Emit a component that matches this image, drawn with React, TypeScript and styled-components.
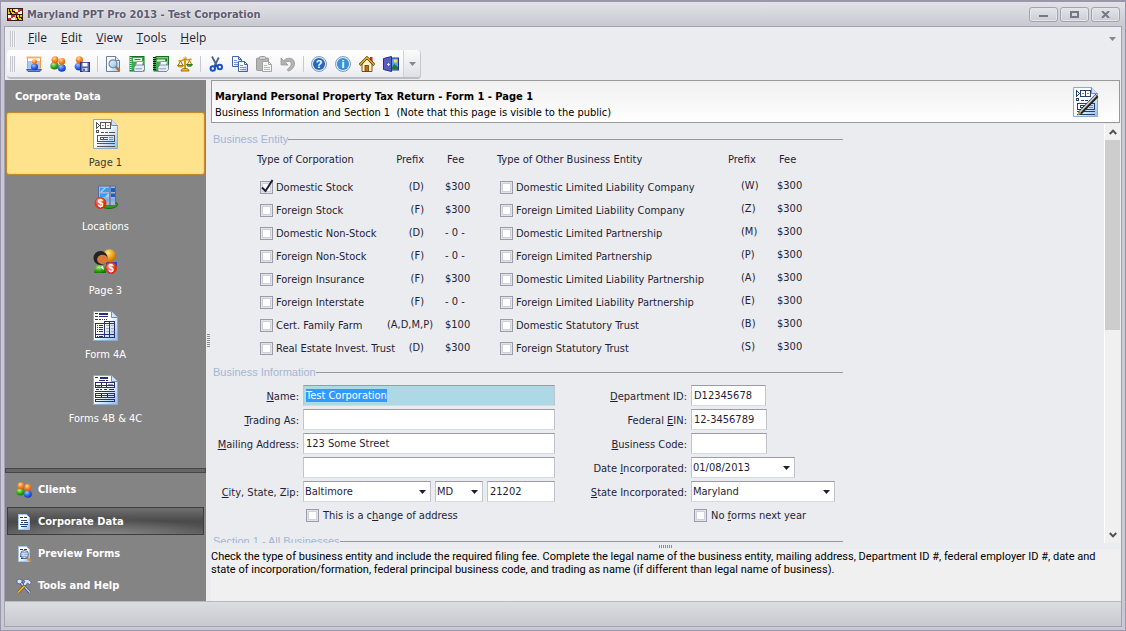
import React, { useEffect, useRef } from "react";
import styled, { createGlobalStyle, css } from "styled-components";

const uiFont = '"DejaVu Sans Condensed", Tahoma, "DejaVu Sans", sans-serif';
const ink = "#1f1e36";
const surface = "#ebecef";
const frameLine = "#a3a3b0";

const GlobalStyle = createGlobalStyle`
  *, *::before, *::after { box-sizing: border-box; }
  body { margin: 0; background: #c9c9d3; }
  button, input, select { font: inherit; color: inherit; margin: 0; }
  ::selection { background: #3399ff; color: #ffffff; }
`;

/* ---------- window frame ---------- */

const Shell = styled.div`
  display: flex;
  flex-direction: column;
  height: 100vh;
  border: 1px solid #9a97aa;
  border-top-width: 2px;
  background: #c9c9d5;
  font: 11px/14px ${uiFont};
  color: ${ink};
  padding: 0 3px 3px;
`;

const TitleBar = styled.header`
  display: flex;
  align-items: center;
  flex: none;
  height: 24px;
  margin: 0 -3px;
  padding: 0 5px 0 6px;
  gap: 4px;
  background: linear-gradient(#e2e2e8, #c8c8d0);
`;

const Title = styled.h1`
  flex: 1;
  margin: 0;
  padding-top: 1px;
  font-size: 11px;
  line-height: 16px;
  color: #5c5b70;
  text-shadow: 0 0 2px #ffffff;
`;

const CaptionButtons = styled.div`
  display: flex;
  gap: 2px;
`;

const CaptionButton = styled.button`
  display: flex;
  align-items: center;
  justify-content: center;
  width: 29px;
  height: 15px;
  padding: 0;
  border: 1px solid #a3a2ae;
  border-radius: 3px;
  background: linear-gradient(#e4e4e9, #cccdd3);
  box-shadow: inset 0 0 0 1px #e4e4ea;
`;

const Frame = styled.div`
  display: flex;
  flex-direction: column;
  flex: 1;
  min-height: 0;
  border: 1px solid ${frameLine};
  background: ${surface};
`;

/* ---------- menu and toolbar ---------- */

const MenuBar = styled.nav`
  display: flex;
  align-items: center;
  flex: none;
  height: 23px;
  padding: 0 5px;
  font: 12px/16px "Open Sans", "Noto Sans", sans-serif;
`;

const Grip = styled.span`
  width: 6px;
  height: 16px;
  margin-right: 5px;
  background: repeating-linear-gradient(90deg, #c4c4cc 0 1px, #f6f6f8 1px 2px);
`;

const MenuItem = styled.button`
  padding: 0 7px 1px;
  border: 0;
  background: none;
`;

const Spacer = styled.span`
  flex: 1;
`;

const OverflowButton = styled.button`
  display: flex;
  padding: 0;
  border: 0;
  background: none;
`;

const ToolBar = styled.div`
  display: flex;
  align-items: stretch;
  align-self: flex-start;
  flex: none;
  height: 29px;
  margin: 0 0 1px 2px;
  padding-left: 3px;
  border-radius: 4px;
  border-bottom: 2px solid #bcbcc6;
  border-right: 1px solid #c6c6ce;
  background: linear-gradient(#ffffff, #f6f6f8 60%, #e9eaee);
`;

const ToolGrip = styled(Grip)`
  align-self: center;
  margin-right: 6px;
`;

const ToolButton = styled.button`
  display: flex;
  align-items: center;
  justify-content: center;
  width: 24px;
  padding: 0;
  border: 0;
  background: none;
`;

const ToolDivider = styled.span`
  align-self: center;
  width: 1px;
  height: 16px;
  margin: 0 3px;
  background: #c8c8cf;
`;

const ToolMore = styled.button`
  display: flex;
  align-items: center;
  justify-content: center;
  width: 17px;
  padding: 0;
  border: 0;
  border-left: 1px solid #d0d0d7;
  border-radius: 0 4px 4px 0;
  background: linear-gradient(#fbfbfc, #dfe0e5);
`;

/* ---------- body ---------- */

const Body = styled.div`
  display: flex;
  flex: 1;
  min-height: 0;
`;

const SideBar = styled.aside`
  display: flex;
  flex-direction: column;
  flex: none;
  width: 201px;
  background: #848484;
  color: #ffffff;
`;

const SideTitle = styled.h2`
  margin: 0;
  padding: 1px 10px 0;
  font-size: 11px;
  line-height: 31px;
`;

const SideItems = styled.div`
  display: flex;
  flex-direction: column;
  flex: 1;
  min-height: 0;
`;

const SideItem = styled.button<{ $active?: boolean }>`
  display: flex;
  flex-direction: column;
  align-items: center;
  flex: none;
  height: 64px;
  padding: 6px 0 0;
  gap: 7px;
  border: 0;
  border-radius: 3px;
  background: none;
  ${(p) =>
    p.$active &&
    css`
      height: 63px;
      margin: 0 1px 1px;
      padding-top: 5px;
      border: 1px solid #c2892f;
      background: #ffe38c;
      box-shadow: inset 0 0 2px #f0b95a;
      color: #3c3a34;
    `}
`;

const SideSplitter = styled.div`
  flex: none;
  height: 5px;
  border: 1px solid #474747;
  background: #666666;
`;

const NavList = styled.nav`
  display: flex;
  flex-direction: column;
  flex: none;
`;

const NavItem = styled.button<{ $active?: boolean }>`
  display: flex;
  align-items: center;
  height: 28px;
  margin: 2px;
  padding: 1px 8px 0;
  gap: 6px;
  border: 1px solid transparent;
  background: none;
  font-weight: bold;
  ${(p) =>
    p.$active &&
    css`
      border-color: #3e3e3e;
      background: radial-gradient(ellipse 60% 70% at 50% 110%, #8a8a8a, transparent),
        linear-gradient(#707070, #4a4a4a 50%, #5a5a5a);
    `}
`;

const SideGutter = styled.div`
  display: flex;
  align-items: center;
  flex: none;
  width: 5px;
  padding-left: 1px;
`;

const Content = styled.main`
  display: flex;
  flex-direction: column;
  flex: 1;
  min-width: 0;
  padding-right: 1px;
`;

const PageHeader = styled.header`
  display: flex;
  align-items: center;
  flex: none;
  height: 43px;
  padding: 0 20px 0 3px;
  border: 1px solid #999999;
  background: linear-gradient(#f0f0f0, #ffffff);
  color: #000000;
`;

const PageHeading = styled.div`
  flex: 1;
  padding-top: 5px;
`;

const PageTitle = styled.h2`
  margin: 0 0 1px;
  font-size: 11px;
  line-height: 15px;
`;

const PageNote = styled.p`
  margin: 0;
  font-size: 11px;
  line-height: 15px;
`;

const ScrollPane = styled.div`
  display: flex;
  flex: 1;
  min-height: 0;
  padding-top: 1px;
`;

const Form = styled.form`
  flex: 1;
  min-width: 0;
  overflow: hidden;
  padding: 3px 0 0 2px;
`;

const ScrollBar = styled.div`
  display: flex;
  flex-direction: column;
  flex: none;
  width: 16px;
  border-left: 1px solid #ffffff;
  background: #f0f0f0;
`;

const ScrollArrow = styled.button`
  display: flex;
  align-items: center;
  justify-content: center;
  height: 16px;
  padding: 0;
  border: 0;
  background: none;
`;

const ScrollTrack = styled.div`
  flex: 1;
`;

const ScrollThumb = styled.div`
  height: 49%;
  background: #cdcdcd;
`;

const HelpSplitter = styled.div`
  display: flex;
  justify-content: center;
  flex: none;
  height: 6px;
  padding-top: 2px;
`;

const HelpText = styled.p`
  flex: none;
  height: 52px;
  margin: 0;
  padding-top: 1px;
  background: #f0f0f0;
  color: #000000;
  line-height: 13px;
  font-family: Roboto, sans-serif;
`;

const StatusBar = styled.footer`
  flex: none;
  height: 25px;
  border-top: 1px solid #b9b9c2;
  background: linear-gradient(#dcdde1, #c8c9cf);
`;

/* ---------- form parts ---------- */

const Section = styled.section`
  max-width: 630px;
`;

const SectionTitle = styled.h3`
  display: flex;
  align-items: center;
  margin: 0;
  font: 11px/14px "Liberation Sans", Arial, sans-serif;
  color: #a3b6d6;
  padding-top: 5px;
  &::after {
    content: "";
    flex: 1;
    height: 1px;
    background: #98989c;
  }
`;

const EntityTables = styled.div`
  display: flex;
  align-items: flex-start;
  gap: 13px;
  padding-left: 44px;
`;

const EntityTable = styled.table<{ $width: number }>`
  width: ${(p) => p.$width}px;
  table-layout: fixed;
  border-collapse: collapse;
  white-space: nowrap;
  th, td {
    padding: 0;
    text-align: left;
    font-weight: normal;
  }
  thead th { height: 30px; padding-bottom: 3px; }
  tbody td { height: 23px; }
`;

const NameCol = styled.col<{ $width: number }>`
  width: ${(p) => p.$width}px;
`;

const PrefixCell = styled.td<{ $side: "left" | "right"; $wide?: boolean }>`
  && {
    text-align: ${(p) => (p.$side === "left" ? "right" : "left")};
    padding-right: ${(p) => (p.$side === "left" ? (p.$wide ? 12 : 21) : 0)}px;
    padding-left: ${(p) => (p.$side === "right" ? 13 : 0)}px;
    padding-bottom: ${(p) => (p.$side === "left" ? 1 : 4)}px;
  }
`;

const FeeCell = styled.td<{ $side: "left" | "right" }>`
  && {
    padding-bottom: ${(p) => (p.$side === "left" ? 1 : 4)}px;
  }
`;

const PrefixHead = styled.th<{ $side: "left" | "right" }>`
  && {
    text-align: ${(p) => (p.$side === "left" ? "right" : "left")};
    padding-right: ${(p) => (p.$side === "left" ? 21 : 0)}px;
  }
`;

const FeeHead = styled.th`
  && { padding-left: 2px; }
`;

const CheckLabel = styled.label<{ $gap?: number }>`
  display: flex;
  align-items: center;
  gap: ${(p) => p.$gap ?? 3}px;
  padding-left: 3px;
  line-height: 16px;
`;

const CheckInput = styled.input.attrs({ type: "checkbox" })`
  appearance: none;
  flex: none;
  width: 13px;
  height: 13px;
  border: 1px solid #9c9bab;
  background: #ffffff;
  box-shadow: inset 0 0 0 1px #e3e3e9, inset 0 0 0 2px #cfd0da;
`;

const CheckBox = styled.span`
  position: relative;
  display: flex;
  svg {
    position: absolute;
    left: 0;
    top: -2px;
    pointer-events: none;
  }
`;

const FieldColumns = styled.div`
  display: flex;
  align-items: flex-start;
  gap: 18px;
  padding-top: 6px;
`;

const FieldGrid = styled.div<{ $label: number; $field: number }>`
  display: grid;
  grid-template-columns: ${(p) => p.$label}px ${(p) => p.$field}px;
  grid-auto-rows: 21px;
  gap: 3px 4px;
`;

const FieldLabel = styled.label`
  justify-self: end;
  align-self: center;
  padding-top: 2px;
  white-space: nowrap;
`;

const boxStyle = css`
  border: 1px solid #c3c3cd;
  border-top-color: #9b9aa6;
  border-bottom-color: #d8d8df;
  border-radius: 0;
  background: #ffffff;
`;

const TextBox = styled.input<{ $width?: number; $current?: boolean }>`
  ${boxStyle}
  width: ${(p) => (p.$width ? `${p.$width}px` : "100%")};
  height: 21px;
  padding: 0 2px 1px;
  outline: none;
  ${(p) => p.$current && css`background: #add8e6;`}
`;

const Combo = styled.span<{ $width: number }>`
  ${boxStyle}
  position: relative;
  display: flex;
  width: ${(p) => p.$width}px;
  height: 21px;
  > svg {
    position: absolute;
    right: 4px;
    top: 8px;
    pointer-events: none;
  }
  > select, > input {
    appearance: none;
    width: 100%;
    min-width: 0;
    height: 19px;
    padding: 0 16px 0 1px;
    border: 0;
    outline: none;
    background: none;
  }
`;

const FieldRow = styled.span`
  display: flex;
  gap: 4px;
`;

const CheckRow = styled.div`
  grid-column: 2;
  display: flex;
  align-items: center;
`;

const LastSection = styled(Section)`
  padding-top: 3px;
`;

/* ---------- drawings ---------- */

const Icon = ({ size = 16, w, h, children }: { size?: number; w?: number; h?: number; children: React.ReactNode }) => (
  <svg width={w ?? size} height={h ?? size} viewBox={`0 0 ${w ?? size} ${h ?? size}`} aria-hidden>
    {children}
  </svg>
);

const DefsSvg = styled.svg`
  position: absolute;
`;

const Defs = () => (
  <DefsSvg width="0" height="0" aria-hidden>
    <defs>
      {[
        ["gOrange", "#ffd9a0", "#f58220", "#d35b0c"],
        ["gGreen", "#b4f08a", "#35a81c", "#147006"],
        ["gBlue", "#9cc2ff", "#2d62e8", "#0a2fae"],
        ["gRed", "#ff9a80", "#f2401c", "#c41c08"],
        ["gGold", "#ffe680", "#eea21a", "#b86a04"],
      ].map(([id, a, b, c]) => (
        <radialGradient id={id} key={id} cx="0.38" cy="0.3" r="0.75">
          <stop offset="0" stopColor={a} />
          <stop offset="0.55" stopColor={b} />
          <stop offset="1" stopColor={c} />
        </radialGradient>
      ))}
      <linearGradient id="gPaper" x1="0" y1="0" x2="1" y2="1">
        <stop offset="0.45" stopColor="#ffffff" />
        <stop offset="1" stopColor="#8fbcf0" />
      </linearGradient>
      <linearGradient id="gLens" x1="0" y1="0" x2="1" y2="1">
        <stop offset="0" stopColor="#eefaff" />
        <stop offset="1" stopColor="#86c0ea" />
      </linearGradient>
    </defs>
  </DefsSvg>
);

const FlagIcon = () => (
  <Icon w={16} h={13}>
    <g shapeRendering="crispEdges">
      <rect width="16" height="13" fill="#3a1a10" />
      <rect x="1" y="1" width="7" height="5" fill="#f5c518" />
      <rect x="8" y="7" width="7" height="5" fill="#f5c518" />
      <path d="M2 1h1v2h1v2h1v1H3V4H2zM5 1h1v2h2v2H7V4H5zM9 7h1v2h1v2h1v1h-2v-2H9zM12 7h1v2h2v2h-1v-1h-2z" fill="#1c1410" />
      <rect x="8" y="1" width="7" height="5" fill="#ffffff" />
      <rect x="1" y="7" width="7" height="5" fill="#ffffff" />
      <path d="M11 1h4v2h-2v1h-2zM8 4h3v2H8zM4 7h4v2H6v1H4zM1 10h3v2H1z" fill="#d42a1c" />
    </g>
  </Icon>
);

const PeopleIcon = () => (
  <Icon>
    <ellipse cx="4.5" cy="9.8" rx="4.2" ry="3.8" fill="url(#gGreen)" />
    <circle cx="5" cy="3.8" r="3.5" fill="url(#gOrange)" />
    <ellipse cx="11.8" cy="12" rx="4" ry="3.8" fill="url(#gBlue)" />
    <circle cx="11.8" cy="5.4" r="3.4" fill="url(#gOrange)" />
  </Icon>
);

const ClientCardIcon = () => (
  <Icon>
    <path d="M1.5 1.5h13v11h-13z" fill="#ffffff" stroke="#f09a4a" />
    <path d="M.5 .5h15v2H.5z" fill="#f7b06a" />
    <path d="M2 5h4v8H2zM11 5h3v8h-3z" fill="#a8c8f4" />
    <path d="M.5 13.5h15l-1.5 2H2z" fill="#6f88c8" stroke="#4660a8" />
    <ellipse cx="8.5" cy="10.8" rx="3.6" ry="3.4" fill="url(#gBlue)" />
    <circle cx="8.5" cy="5.8" r="2.6" fill="url(#gOrange)" />
  </Icon>
);

const PersonSaveIcon = () => (
  <Icon>
    <ellipse cx="5" cy="10.5" rx="4.4" ry="4" fill="url(#gBlue)" />
    <circle cx="5.4" cy="3.8" r="3.6" fill="url(#gOrange)" />
    <rect x="6.5" y="6.5" width="9" height="9" fill="#5866b8" stroke="#2c387e" />
    <rect x="8.5" y="6.8" width="5" height="3.6" fill="#ffffff" />
    <rect x="8.5" y="12" width="5" height="3.4" fill="#d4d9ee" />
    <rect x="9.3" y="12.6" width="1.4" height="2.4" fill="#2c387e" />
  </Icon>
);

const PreviewIcon = () => (
  <Icon>
    <path d="M1.5 .5h9l4 4v11h-13z" fill="url(#gPaper)" stroke="#6a7fa6" />
    <path d="M10.5 .5v4h4" fill="#dfeafa" stroke="#6a7fa6" />
    <path d="M10.6 10.6l4 4" stroke="#b8702c" strokeWidth="2.4" />
    <circle cx="8" cy="7.8" r="4" fill="url(#gLens)" stroke="#76879e" strokeWidth="1.2" />
  </Icon>
);

const Printer = () => (
  <>
    <path d="M8 5.500h6.500l-1.500 5H6z" fill="#ffffff" stroke="#7c8cb0" strokeWidth=".8" />
    <path d="M5 11l2-2h8.500v4.500l-2 2H5z" fill="#e6ebf6" stroke="#6c7896" strokeWidth=".8" />
    <path d="M6.500 12.800h6.500" stroke="#8c9abc" />
  </>
);

const PrintBookIcon = () => (
  <Icon>
    <rect x="1" y=".5" width="14" height="14.500" fill="#3cae48" stroke="#14701f" />
    <rect x="4" y="2" width="9" height="3.500" fill="#e6f8e2" />
    <path d="M5.500 3.500h6" stroke="#1f9434" />
    <path d="M1.500 1v14" stroke="#e6e6e6" strokeWidth="2" strokeDasharray="1 1" />
    <Printer />
  </Icon>
);

const PrintBooksIcon = () => (
  <Icon>
    <rect x="3" y=".5" width="12.500" height="11" fill="#7ccc7c" stroke="#14701f" />
    <rect x="1" y="3" width="12.500" height="12" fill="#3cae48" stroke="#14701f" />
    <path d="M4 4.500h8" stroke="#d8f4d4" strokeWidth="2" />
    <path d="M1.500 1v14" stroke="#161616" strokeWidth="3" strokeDasharray="1 1" />
    <Printer />
  </Icon>
);

const ScalesIcon = () => (
  <Icon>
    <g stroke="#a96d06" fill="none">
      <path d="M8 1v12" stroke="#d79a12" strokeWidth="2" />
      <path d="M1.500 4.500c3 1.500 4-1 6.500-1s3.500 1 6.500-.5" stroke="#d79a12" strokeWidth="1.500" />
      <path d="M3.500 5L1 9.500h5zM12.500 4.500L10 9h5z" />
    </g>
    <path d="M.5 9.500h6c-.5 2-5.500 2-6 0z" fill="#f0bc2c" stroke="#a96d06" strokeWidth=".8" />
    <path d="M9.500 8.500h6c-.5 2.500-5.500 2.500-6 0z" fill="#4aa52c" stroke="#2c6c14" strokeWidth=".8" />
    <path d="M4 15c0-2 2-2.500 4-2.500s4 .5 4 2.500z" fill="#f0bc2c" stroke="#a96d06" />
    <circle cx="8" cy="2" r="1.600" fill="url(#gGold)" />
  </Icon>
);

const CutIcon = () => (
  <Icon>
    <path d="M4 .5l5 9.500M10.800 1.500L6.500 10" stroke="#4a6488" strokeWidth="1.800" fill="none" />
    <circle cx="4.800" cy="12.500" r="2.200" fill="none" stroke="#1c50c0" strokeWidth="2" />
    <circle cx="11.800" cy="11" r="2.200" fill="none" stroke="#1c50c0" strokeWidth="2" />
    <path d="M6.500 10l3.500 0" stroke="#1c50c0" strokeWidth="2" />
  </Icon>
);

const Sheet = ({ x, y, gray }: { x: number; y: number; gray?: boolean }) => (
  <g transform={`translate(${x} ${y})`}>
    <path d="M.5 .5h6l3 3v7h-9z" fill={gray ? "#f4f4f4" : "url(#gPaper)"} stroke={gray ? "#a2a2a2" : "#3f63ae"} />
    <path d="M6.500 .5v3h3" fill="none" stroke={gray ? "#a2a2a2" : "#3f63ae"} />
    <path d="M2 4.500h3M2 6.500h6M2 8.500h6" stroke={gray ? "#b6b6b6" : "#6f94d8"} />
  </g>
);
const CopyIcon = () => (
  <Icon>
    <Sheet x={0} y={0} />
    <Sheet x={6} y={5} />
  </Icon>
);
const PasteIcon = () => (
  <Icon>
    <rect x=".5" y="2" width="12" height="12.500" rx="1" fill="#b4b4b4" stroke="#9a9a9a" />
    <rect x="3.500" y=".5" width="6" height="3" rx="1" fill="#d2d2d2" stroke="#9a9a9a" />
    <Sheet x={6} y={5} gray />
  </Icon>
);
const UndoIcon = () => (
  <Icon>
    <path d="M1 2v7h7L5.600 6.600C8 4.800 11 5 11.200 7.600c.2 2.400-1.700 4.200-4 5.900l1.300 1.700c3.500-1.800 6.500-4.500 6-8.300C14 1.700 8 .6 3.600 4.600z" fill="#b2b2b2" stroke="#989898" strokeWidth=".8" />
  </Icon>
);

const RoundBadge = ({ text }: { text: string }) => (
  <Icon>
    <circle cx="8" cy="8" r="7.500" fill="#dce9f8" stroke="#7f9fc8" />
    <circle cx="8" cy="8" r="6" fill={text === "?" ? "#2a67b8" : "#3f8fd6"} />
    <text x="8" y="12" textAnchor="middle" fontFamily="Liberation Sans" fontWeight="bold" fontSize="11" fill="#ffffff">
      {text}
    </text>
  </Icon>
);

const HomeIcon = () => (
  <Icon>
    <rect x="11" y="1" width="2.500" height="5" fill="#b8321c" />
    <path d="M3 8l5-5 5 5v7.500H3z" fill="#fff3c4" stroke="#6e5420" />
    <path d="M.7 9L8 1.700 15.300 9" fill="none" stroke="#4a3410" strokeWidth="2.600" />
    <path d="M.9 8.700L8 1.700l7.100 7" fill="none" stroke="#f0b41e" strokeWidth="1.200" />
    <rect x="6" y="9.500" width="3.500" height="6" fill="#c46a16" stroke="#6e3a08" strokeWidth=".8" />
  </Icon>
);
const ExitIcon = () => (
  <Icon>
    <rect x="6.500" y="2" width="9" height="12" fill="#4ea8ec" stroke="#28329c" />
    <path d="M8 13l3-5 4 3v2.500z" fill="#1e7a30" />
    <circle cx="12.500" cy="5" r="1.800" fill="#ffe14a" />
    <path d="M.5 2.500l8-2v15l-8-2z" fill="#5a5cc0" stroke="#2c2e86" />
    <path d="M4 8.500h3M5.500 7v3" stroke="#d8dcff" />
  </Icon>
);

const FormPage = ({ color = "#555555", children }: { color?: string; children: React.ReactNode }) => (
  <>
    <path d="M.5 .5h18l6 6v23H.5z" fill="url(#gPaper)" stroke="#8da9cc" />
    <path d="M18.500 .5v6h6" fill="#cfe4fa" stroke="#6c8fbe" />
    <g stroke={color} fill="none" shapeRendering="crispEdges">
      {children}
    </g>
  </>
);
const pageOneLines = (
  <>
    <path d="M3.500 3.500v6l3-3z" fill="#ffffff" />
    <path d="M7.500 3.500h10v6h-10zM12.500 3.500v6" />
    <path d="M3.500 11.500h2v2h-2zM8 13.500h3M12 13.500h3M16 13.500h6" />
    <path d="M4.500 16.500h17v6h-17zM7 18.500h3v2h-3zM11 18.500h4M11 20.500h4" />
    <path d="M4 24.500h18M4 27.500h18" />
    <path d="M9 6.500h2M14 6.500h2M16 18.500h4M16 20.500h4" stroke="#d86a4a" />
  </>
);
const PageOneIcon = () => (
  <Icon w={25} h={30}>
    <FormPage>{pageOneLines}</FormPage>
  </Icon>
);
const EditPageIcon = () => (
  <Icon w={26} h={30}>
    <FormPage color="#24406c">{pageOneLines}</FormPage>
    <path d="M6.500 26.500L24 8.500" stroke="#222222" strokeWidth="4" />
    <path d="M6.500 25.500L23 8.300" stroke="#c9ccc8" strokeWidth="1.800" />
    <path d="M4.500 28.500l1-4 3 2z" fill="#b09040" />
  </Icon>
);
const Form4AIcon = () => (
  <Icon w={25} h={30}>
    <FormPage color="#2b2f6c">
      <path d="M2 2.500h3M6 2.500h9M6 3.500h9M2 5.500h3M6 5.500h9M2 8.500h3M6 8.500h2M9 8.500h1M11 8.500h1M13 8.500h1" />
      <path d="M11 10.500h11M2.500 12.500h19v14h-19zM11.500 10v17M16.500 10v17M21.500 10v17M2 23.500h20" />
      <path d="M4 14.500h1M6 14.500h4M4 16.500h1M6 16.500h4M4 18.500h1M6 18.500h4M4 20.500h1M6 20.500h4M4 25.500h1M6 25.500h4" />
      <path d="M13 14.500h3M13 17.500h3M13 20.500h3M18 14.500h3M18 17.500h3M18 20.500h3" stroke="#a5acb8" />
    </FormPage>
  </Icon>
);
const Form4BIcon = () => (
  <Icon w={25} h={30}>
    <FormPage color="#2b2f6c">
      <path d="M2 2.500h3M7 2.500h8M7 3.500h8M6 5.500h6M13 5.500h2" />
      <path d="M2.500 7.500h19v5h-19zM8.500 8v5M13.500 8v5M2 10.500h20" />
      <path d="M3 14.500h3M7 14.500h2M11 14.500h3M16 14.500h5M2 16.500h20" />
      <path d="M2.500 18.500h19v4h-19zM8.500 18v5M14.500 18v5M2 20.500h20" />
      <path d="M2.500 24.500h19v2h-19z" />
      <path d="M4 11.500h3M15 9.500h5" stroke="#8b92b4" />
    </FormPage>
  </Icon>
);

const Money = ({ x, y }: { x: number; y: number }) => (
  <>
    <circle cx={x} cy={y} r="5.500" fill="url(#gRed)" stroke="#d83418" />
    <text x={x} y={y + 4} textAnchor="middle" fontFamily="Liberation Sans" fontWeight="bold" fontSize="10" fill="#ffffff">
      $
    </text>
  </>
);
const LocationsIcon = () => (
  <Icon w={24} h={25}>
    <ellipse cx="15" cy="19.500" rx="8.500" ry="4" fill="#2f9a22" stroke="#176c10" />
    <path d="M4.500 1h17v19.500h-17z" fill="#aab4d0" stroke="#5d679c" />
    <path d="M6 3h9v4H6zM6 8.500h9v3.500H6z" fill="#3c9af0" />
    <path d="M17 3h4v4h-4zM17 8.500h4v3.500h-4z" fill="#1f5fc0" />
    <path d="M10 13.500h5v3h-5zM17 13.500h4v3h-4z" fill="#6cb4f4" />
    <path d="M16 1v20" stroke="#4f588e" />
    <path d="M6 7l4-4h2L8 7zM11 12l3-3.500h1V12z" fill="#a6d4fa" />
    <Money x={6.500} y={18} />
  </Icon>
);
const PageThreeIcon = () => (
  <Icon w={25} h={25}>
    <path d="M13 13h11v5H13z" fill="#2846c8" />
    <path d="M1.500 24c-1-6 2-8 5.500-8s6 2 6 8z" fill="url(#gGreen)" />
    <circle cx="16.500" cy="6.500" r="6.300" fill="url(#gGold)" />
    <circle cx="7.500" cy="9" r="7" fill="#232323" />
    <ellipse cx="9.500" cy="10.500" rx="5.400" ry="4.700" fill="#d8783a" />
    <path d="M7 18l4 3-1-4z" fill="#ffffff" />
    <Money x={18} y={19} />
  </Icon>
);

const smallLines = (
  <path d="M4 3.500h3M8 3.500h3M5 6.500h6M4 10.500h8M5 12.500h6M5 8.500h2M8 8.500h4" />
);
const CorpDataIcon = () => (
  <Icon>
    <path d="M2.500 .5h8l3 3v12h-11z" fill="url(#gPaper)" stroke="#a8c4e8" />
    <g stroke="#26446e" shapeRendering="crispEdges">{smallLines}</g>
  </Icon>
);
const PreviewFormsIcon = () => (
  <Icon>
    <path d="M2.500 .5h8l3 3v12h-11z" fill="url(#gPaper)" stroke="#a8c4e8" />
    <g stroke="#26446e" shapeRendering="crispEdges">{smallLines}</g>
    <path d="M10.500 11l4.500 4.500" stroke="#d08a3c" strokeWidth="2.200" />
    <circle cx="8.500" cy="8.500" r="4" fill="#b9d8f2" fillOpacity=".75" stroke="#5a6f94" />
  </Icon>
);
const ToolsIcon = () => (
  <Icon>
    <path d="M3 3l11 11.500" stroke="#3c4c86" strokeWidth="2.600" />
    <path d="M3 3l11 11.500" stroke="#c8d2f4" strokeWidth="1.200" />
    <path d="M1 5V2l2-1 3 1v2L4 6z" fill="#dde4fa" stroke="#4a5890" strokeWidth=".8" />
    <path d="M2 14.500L9 7.500" stroke="#8a5a10" strokeWidth="3" />
    <path d="M2 14.500L9 7.500" stroke="#f2b632" strokeWidth="1.600" />
    <path d="M7.500 2.500C10 .5 13.500 1 15.500 5l-2 1.500-2-1.500-2.500 3-2-2 2-2.500z" fill="#dde4fa" stroke="#4a5890" strokeWidth=".8" />
  </Icon>
);

const Triangle = ({ color = ink }: { color?: string }) => (
  <svg width="7" height="4" viewBox="0 0 7 4" aria-hidden>
    <path d="M0 0h7L3.500 4z" fill={color} />
  </svg>
);
const Chevron = ({ up }: { up?: boolean }) => (
  <svg width="8" height="6" viewBox="0 0 8 6" aria-hidden>
    <path d={up ? "M.8 5L4 1.600 7.200 5" : "M.8 1L4 4.400 7.200 1"} fill="none" stroke="#505050" strokeWidth="2" />
  </svg>
);

/* ---------- data ---------- */

const menus = ["File", "Edit", "View", "Tools", "Help"];

const toolGroups = [
  [
    ["Open client", <ClientCardIcon />],
    ["Clients", <PeopleIcon />],
    ["Save client", <PersonSaveIcon />],
  ],
  [
    ["Preview", <PreviewIcon />],
    ["Print form", <PrintBookIcon />],
    ["Print all forms", <PrintBooksIcon />],
    ["Balance", <ScalesIcon />],
  ],
  [
    ["Cut", <CutIcon />],
    ["Copy", <CopyIcon />],
    ["Paste", <PasteIcon />],
    ["Undo", <UndoIcon />],
  ],
  [
    ["Help", <RoundBadge text="?" />],
    ["About", <RoundBadge text="i" />],
    ["Home", <HomeIcon />],
    ["Exit", <ExitIcon />],
  ],
] as [string, React.ReactNode][][];

const pages: [string, React.ReactNode][] = [
  ["Page 1", <PageOneIcon />],
  ["Locations", <LocationsIcon />],
  ["Page 3", <PageThreeIcon />],
  ["Form 4A", <Form4AIcon />],
  ["Forms 4B & 4C", <Form4BIcon />],
];

const navItems: [string, React.ReactNode][] = [
  ["Clients", <PeopleIcon />],
  ["Corporate Data", <CorpDataIcon />],
  ["Preview Forms", <PreviewFormsIcon />],
  ["Tools and Help", <ToolsIcon />],
];

const corporations = [
  ["Domestic Stock", "(D)", "$300"],
  ["Foreign Stock", "(F)", "$300"],
  ["Domestic Non-Stock", "(D)", "- 0 -"],
  ["Foreign Non-Stock", "(F)", "- 0 -"],
  ["Foreign Insurance", "(F)", "$300"],
  ["Foreign Interstate", "(F)", "- 0 -"],
  ["Cert. Family Farm", "(A,D,M,P)", "$100"],
  ["Real Estate Invest. Trust", "(D)", "$300"],
];

const otherEntities = [
  ["Domestic Limited Liability Company", "(W)", "$300"],
  ["Foreign Limited Liability Company", "(Z)", "$300"],
  ["Domestic Limited Partnership", "(M)", "$300"],
  ["Foreign Limited Partnership", "(P)", "$300"],
  ["Domestic Limited Liability Partnership", "(A)", "$300"],
  ["Foreign Limited Liability Partnership", "(E)", "$300"],
  ["Domestic Statutory Trust", "(B)", "$300"],
  ["Foreign Statutory Trust", "(S)", "$300"],
];

/* ---------- composed parts ---------- */

const IconSlot = styled.span`
  display: flex;
  align-items: center;
  justify-content: center;
  height: 31px;
`;

const Check = ({ children, checked, gap }: { children: React.ReactNode; checked?: boolean; gap?: number }) => (
  <CheckLabel $gap={gap}>
    <CheckBox>
      <CheckInput defaultChecked={checked} />
      {checked && (
        <svg width="14" height="14" viewBox="0 0 14 14" aria-hidden>
          <path d="M2 8.500L5.500 12 12.500 1" fill="none" stroke={ink} strokeWidth="2" />
        </svg>
      )}
    </CheckBox>
    <span>{children}</span>
  </CheckLabel>
);

const Entities = ({ title, rows, side, checked }: { title: string; rows: string[][]; side: "left" | "right"; checked?: string }) => (
  <EntityTable $width={side === "left" ? 227 : 320}>
    <colgroup>
      <NameCol $width={side === "left" ? 120 : 231} />
      <NameCol $width={side === "left" ? 68 : 49} />
      <NameCol $width={side === "left" ? 39 : 40} />
    </colgroup>
    <thead>
      <tr>
        <th>{title}</th>
        <PrefixHead $side={side}>Prefix</PrefixHead>
        <FeeHead>Fee</FeeHead>
      </tr>
    </thead>
    <tbody>
      {rows.map(([name, prefix, fee]) => (
        <tr key={name}>
          <td>
            <Check checked={name === checked}>{name}</Check>
          </td>
          <PrefixCell $side={side} $wide={prefix.length > 3}>{prefix}</PrefixCell>
          <FeeCell $side={side}>{fee}</FeeCell>
        </tr>
      ))}
    </tbody>
  </EntityTable>
);

const SideDots = () => (
  <svg width="3" height="14" viewBox="0 0 3 14" aria-hidden>
    <path d="M1.500 0v14" stroke="#8c8c96" strokeWidth="3" strokeDasharray="1 1" />
  </svg>
);
const HelpDots = () => (
  <svg width="14" height="3" viewBox="0 0 14 3" aria-hidden>
    <path d="M0 1.500h14" stroke="#8c8c96" strokeWidth="3" strokeDasharray="1 1" />
  </svg>
);

export default function App() {
  const nameRef = useRef<HTMLInputElement>(null);
  useEffect(() => {
    nameRef.current?.focus();
    nameRef.current?.select();
  }, []);

  return (
    <>
      <GlobalStyle />
      <Shell>
        <Defs />
        <TitleBar>
          <FlagIcon />
          <Title>Maryland PPT Pro 2013 - Test Corporation</Title>
          <CaptionButtons>
            <CaptionButton aria-label="Minimize">
              <svg width="9" height="7"><rect y="4" width="9" height="2" fill="#77778a" /></svg>
            </CaptionButton>
            <CaptionButton aria-label="Maximize">
              <svg width="9" height="7"><rect x="1" y="1" width="7" height="5" fill="none" stroke="#77778a" strokeWidth="2" /></svg>
            </CaptionButton>
            <CaptionButton aria-label="Close">
              <svg width="9" height="7"><path d="M1 0l7 7M8 0L1 7" stroke="#77778a" strokeWidth="2" /></svg>
            </CaptionButton>
          </CaptionButtons>
        </TitleBar>

        <Frame>
          <MenuBar>
            <Grip />
            {menus.map((m) => (
              <MenuItem key={m}>
                <u>{m[0]}</u>
                {m.slice(1)}
              </MenuItem>
            ))}
            <Spacer />
            <OverflowButton aria-label="Menu options">
              <Triangle color="#85859a" />
            </OverflowButton>
          </MenuBar>
          <ToolBar>
            <ToolGrip />
            {toolGroups.map((group, i) => (
              <React.Fragment key={i}>
                {i > 0 && <ToolDivider />}
                {group.map(([label, icon]) => (
                  <ToolButton key={label} aria-label={label}>{icon}</ToolButton>
                ))}
              </React.Fragment>
            ))}
            <ToolMore aria-label="Toolbar options">
              <Triangle color="#85859a" />
            </ToolMore>
          </ToolBar>

          <Body>
            <SideBar>
              <SideTitle>Corporate Data</SideTitle>
              <SideItems>
                {pages.map(([label, icon], i) => (
                  <SideItem key={label} $active={i === 0}>
                    <IconSlot>{icon}</IconSlot>
                    {label}
                  </SideItem>
                ))}
              </SideItems>
              <SideSplitter />
              <NavList>
                {navItems.map(([label, icon]) => (
                  <NavItem key={label} $active={label === "Corporate Data"}>
                    {icon}
                    {label}
                  </NavItem>
                ))}
              </NavList>
            </SideBar>
            <SideGutter><SideDots /></SideGutter>

            <Content>
              <PageHeader>
                <PageHeading>
                  <PageTitle>Maryland Personal Property Tax Return - Form 1 - Page 1</PageTitle>
                  <PageNote>Business Information and Section 1 &nbsp;(Note that this page is visible to the public)</PageNote>
                </PageHeading>
                <EditPageIcon />
              </PageHeader>

              <ScrollPane>
                <Form>
                  <Section>
                    <SectionTitle>Business Entity</SectionTitle>
                    <EntityTables>
                      <Entities title="Type of Corporation" rows={corporations} side="left" checked="Domestic Stock" />
                      <Entities title="Type of Other Business Entity" rows={otherEntities} side="right" />
                    </EntityTables>
                  </Section>

                  <Section>
                    <SectionTitle>Business Information</SectionTitle>
                    <FieldColumns>
                      <FieldGrid $label={86} $field={252}>
                        <FieldLabel htmlFor="name"><u>N</u>ame:</FieldLabel>
                        <TextBox id="name" ref={nameRef} $current defaultValue="Test Corporation" />
                        <FieldLabel htmlFor="trading"><u>T</u>rading As:</FieldLabel>
                        <TextBox id="trading" />
                        <FieldLabel htmlFor="address"><u>M</u>ailing Address:</FieldLabel>
                        <TextBox id="address" defaultValue="123 Some Street" />
                        <span />
                        <TextBox aria-label="Mailing address, line 2" />
                        <FieldLabel htmlFor="city"><u>C</u>ity, State, Zip:</FieldLabel>
                        <FieldRow>
                          <Combo $width={128}>
                            <select id="city"><option>Baltimore</option></select>
                            <Triangle />
                          </Combo>
                          <Combo $width={48}>
                            <select aria-label="State"><option>MD</option></select>
                            <Triangle />
                          </Combo>
                          <TextBox aria-label="Zip" $width={68} defaultValue="21202" />
                        </FieldRow>
                        <CheckRow>
                          <Check gap={4}>This is a c<u>h</u>ange of address</Check>
                        </CheckRow>
                      </FieldGrid>

                      <FieldGrid $label={114} $field={144}>
                        <FieldLabel htmlFor="dept"><u>D</u>epartment ID:</FieldLabel>
                        <TextBox id="dept" $width={75} defaultValue="D12345678" />
                        <FieldLabel htmlFor="ein">Federal <u>E</u>IN:</FieldLabel>
                        <TextBox id="ein" $width={76} defaultValue="12-3456789" />
                        <FieldLabel htmlFor="code"><u>B</u>usiness Code:</FieldLabel>
                        <TextBox id="code" $width={76} />
                        <FieldLabel htmlFor="date">Date <u>I</u>ncorporated:</FieldLabel>
                        <Combo $width={104}>
                          <input id="date" defaultValue="01/08/2013" />
                          <Triangle />
                        </Combo>
                        <FieldLabel htmlFor="state"><u>S</u>tate Incorporated:</FieldLabel>
                        <Combo $width={144}>
                          <select id="state"><option>Maryland</option></select>
                          <Triangle />
                        </Combo>
                        <CheckRow>
                          <Check gap={4}>No <u>f</u>orms next year</Check>
                        </CheckRow>
                      </FieldGrid>
                    </FieldColumns>
                  </Section>

                  <LastSection>
                    <SectionTitle>Section 1 - All Businesses</SectionTitle>
                  </LastSection>
                </Form>
                <ScrollBar>
                  <ScrollArrow type="button" aria-label="Scroll up"><Chevron up /></ScrollArrow>
                  <ScrollTrack><ScrollThumb /></ScrollTrack>
                  <ScrollArrow type="button" aria-label="Scroll down"><Chevron /></ScrollArrow>
                </ScrollBar>
              </ScrollPane>

              <HelpSplitter><HelpDots /></HelpSplitter>
              <HelpText>
                Check the type of business entity and include the required filing fee. Complete the legal name of the
                business entity, mailing address, Department ID #, federal employer ID #, date and state of
                incorporation/formation, federal principal business code, and trading as name (if different than legal
                name of business).
              </HelpText>
            </Content>
          </Body>
          <StatusBar />
        </Frame>
      </Shell>
    </>
  );
}
